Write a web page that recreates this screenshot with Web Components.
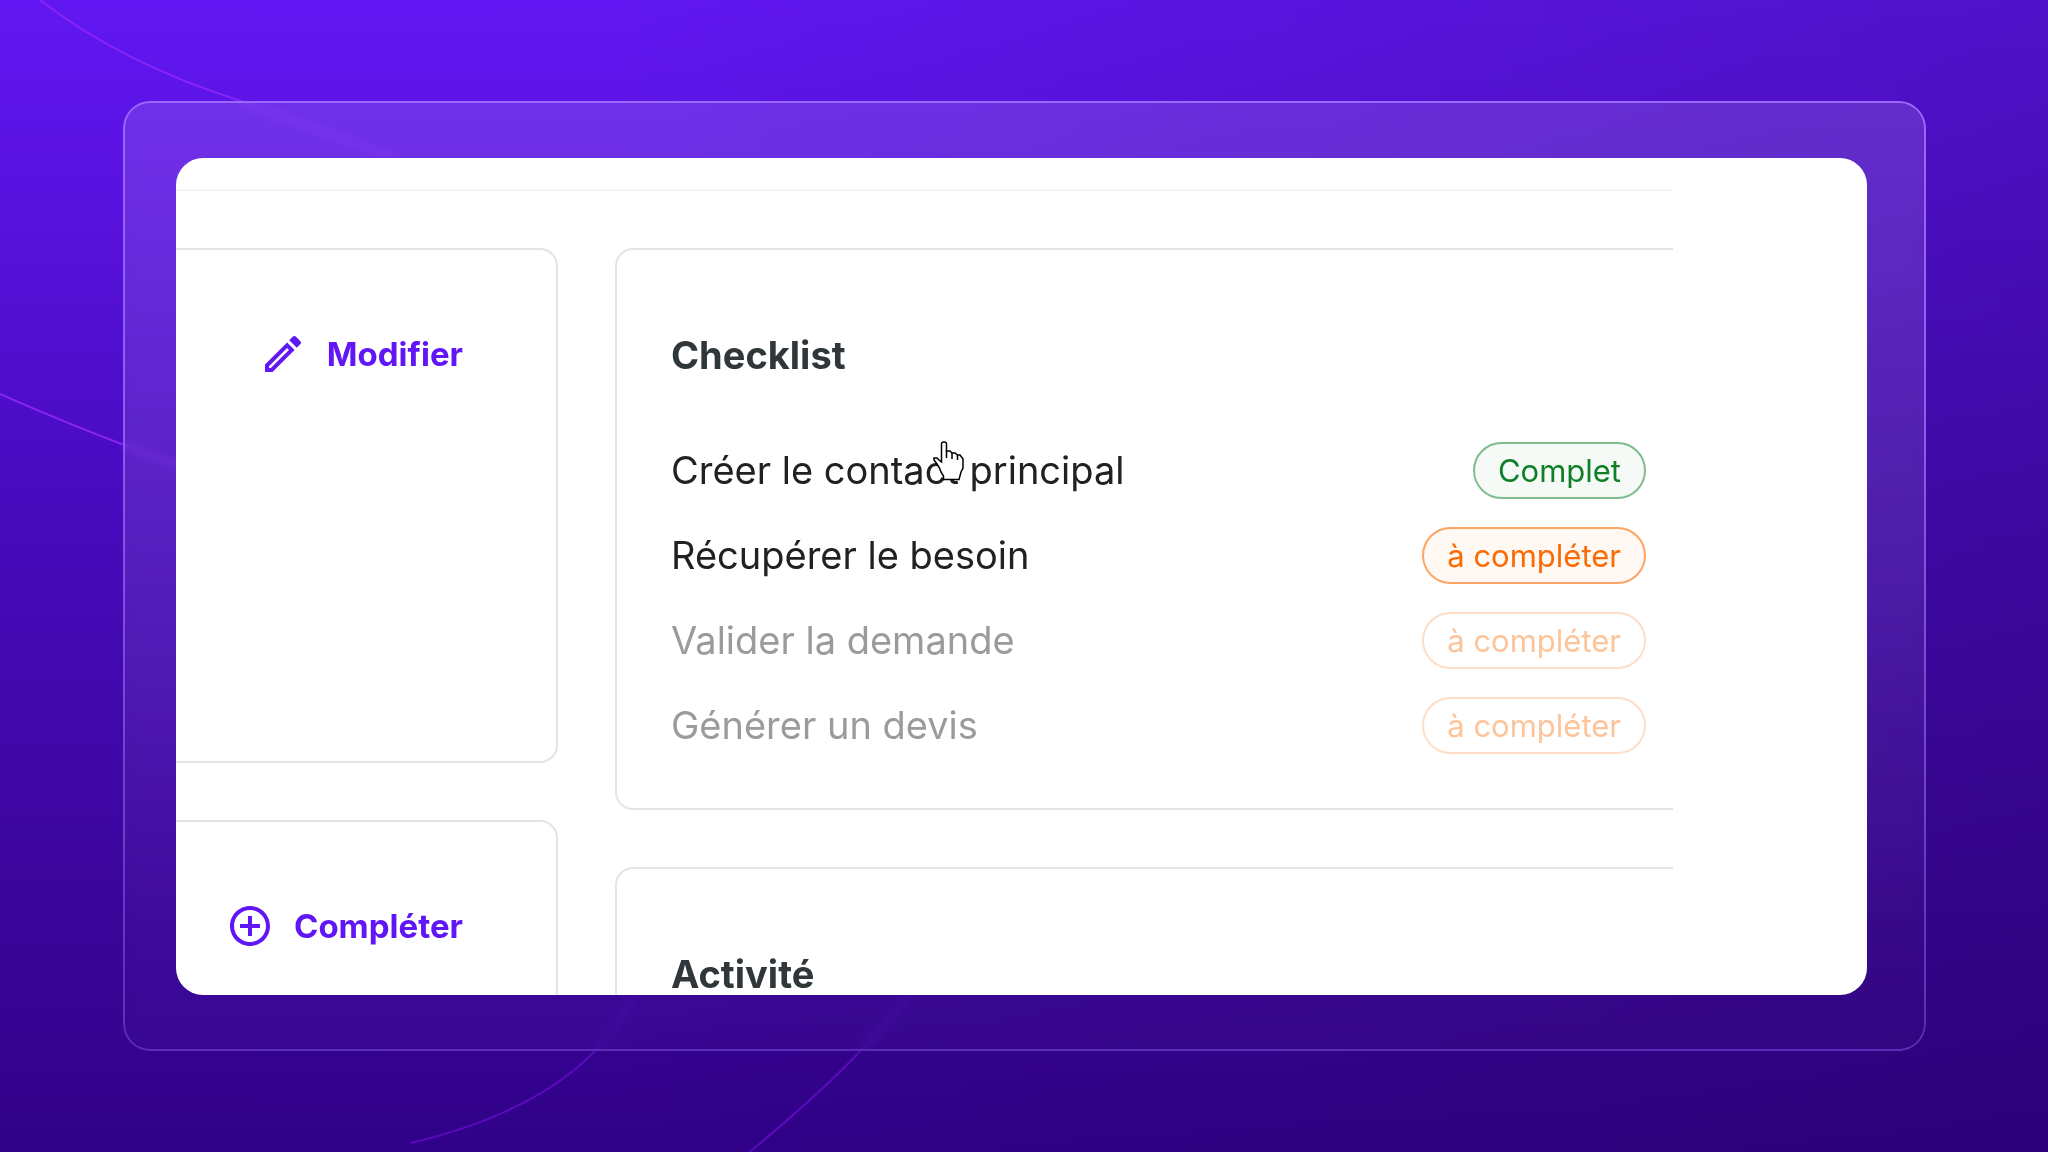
<!DOCTYPE html>
<html lang="fr">
<head>
<meta charset="utf-8">
<meta name="viewport" content="width=device-width, initial-scale=1">
<title>Checklist</title>
<style>
  body { margin: 0; font-family: Inter, "Liberation Sans", sans-serif; font-optical-sizing: none; }
</style>
</head>
<body>
<promo-stage>
  <glass-frame>
    <app-window>
      <action-card slot="aside" class="tall" icon="edit">Modifier</action-card>
      <action-card slot="aside" icon="add">Compléter</action-card>
      <panel-card heading="Checklist">
        <check-list>
          <check-item status="done" label="Créer le contact principal"><hand-pointer slot="pointer"></hand-pointer></check-item>
          <check-item status="todo" label="Récupérer le besoin"></check-item>
          <check-item status="todo" label="Valider la demande" muted></check-item>
          <check-item status="todo" label="Générer un devis" muted></check-item>
        </check-list>
      </panel-card>
      <panel-card heading="Activité"></panel-card>
    </app-window>
  </glass-frame>
</promo-stage>

<script>
  class BaseElement extends HTMLElement {
    connectedCallback() {
      if (!this.shadowRoot) this.attachShadow({ mode: 'open' }).innerHTML = this.render();
    }
  }

  // Full-window violet backdrop with thin decorative curves
  customElements.define('promo-stage', class extends BaseElement {
    render() {
      return `<style>
        :host {
          display: flex; box-sizing: border-box; height: 100vh; position: relative; overflow: hidden;
          padding: 101px 122px 101px 123px;
          background:
            linear-gradient(90deg, rgba(24,0,70,0) 30%, rgba(24,0,70,.24) 100%),
            linear-gradient(180deg, #6117f2 0%, #5812de 18%, #480bbe 43%, #3c069d 76%, #300188 100%);
        }
        svg { position: absolute; left: 0; top: 0; width: 100%; height: 100%; }
        path { fill: none; stroke-width: 2; }
        .high { stroke: #8a24f5; }
        .low { stroke: #5a0cbc; }
      </style>
      <svg viewBox="0 0 2048 1152" preserveAspectRatio="none" aria-hidden="true">
        <path class="high" d="M40 0Q123 64 241 101Q310 128 393 157"/>
        <path class="high" d="M0 394Q76 428 180 466"/>
        <path class="low" d="M411 1143Q590 1100 635 990"/>
        <path class="low" d="M747 1154Q862 1060 912 990"/>
      </svg>
      <slot></slot>`;
    }
  });

  customElements.define('glass-frame', class extends BaseElement {
    render() {
      return `<style>
        :host {
          display: flex; flex: 1; min-width: 0; box-sizing: border-box; position: relative;
          padding: 57px 59px 56px 53px; border-radius: 27px;
          background: linear-gradient(180deg, rgba(255,255,255,.12), rgba(255,255,255,.09) 45%, rgba(255,255,255,.02) 90%);
          backdrop-filter: blur(5px);
        }
        .edge {
          position: absolute; inset: 0; border-radius: inherit; padding: 2px; pointer-events: none;
          background: linear-gradient(180deg, #9a68fb, #8e5af0 35%, #5b2cb6);
          mask: linear-gradient(#000 0 0) content-box exclude, linear-gradient(#000 0 0);
        }
      </style>
      <div class="edge"></div>
      <slot></slot>`;
    }
  });

  // White window: header rule, an aside column and a main column that run past the bottom
  customElements.define('app-window', class extends BaseElement {
    render() {
      return `<style>
        :host {
          display: block; flex: 1; min-width: 0; overflow: hidden; position: relative;
          background: #fff; border-radius: 27px; box-sizing: border-box; padding-right: 194px;
        }
        header { height: 31px; border-bottom: 2px solid #f4f4f4; }
        .columns { display: flex; gap: 57px; padding-top: 57px; }
        aside, main { display: flex; flex-direction: column; gap: 57px; }
        aside { flex: 0 0 382px; }
        main { flex: 1; min-width: 0; }
      </style>
      <header></header>
      <div class="columns">
        <aside><slot name="aside"></slot></aside>
        <main><slot></slot></main>
      </div>`;
    }
  });

  const icons = {
    edit: 'm14.06 9.02.92.92L5.92 19H5v-.92l9.06-9.06M17.66 3c-.25 0-.51.1-.7.29l-1.83 1.83 3.75 3.75 1.83-1.83c.39-.39.39-1.02 0-1.41l-2.34-2.34c-.2-.2-.45-.29-.71-.29zm-3.6 3.19L3 17.25V21h3.75L17.81 9.94l-3.75-3.75z',
    add: 'M13 7h-2v4H7v2h4v4h2v-4h4v-2h-4V7zm-1-5C6.48 2 2 6.48 2 12s4.48 10 10 10 10-4.48 10-10S17.52 2 12 2zm0 18c-4.41 0-8-3.59-8-8s3.59-8 8-8 8 3.59 8 8-3.59 8-8 8z'
  };

  customElements.define('action-card', class extends BaseElement {
    render() {
      return `<style>
        :host {
          display: flex; justify-content: flex-end; align-items: flex-start; box-sizing: border-box;
          height: 280px; padding: 80px 93px 0 0; border: 2px solid #e4e4e4; border-left: 0; border-radius: 0 18px 18px 0;
        }
        :host(.tall) { height: 515px; }
        button {
          display: flex; align-items: center; gap: 20px; padding: 0; border: 0; background: none;
          font: 700 33px/48px Inter, "Liberation Sans", sans-serif; color: #6117f5; cursor: pointer;
        }
        svg { width: 48px; height: 48px; fill: currentColor; }
      </style>
      <button type="button">
        <svg viewBox="0 0 24 24" aria-hidden="true"><path d="${icons[this.getAttribute('icon')]}"/></svg>
        <slot></slot>
      </button>`;
    }
  });

  customElements.define('panel-card', class extends BaseElement {
    render() {
      return `<style>
        :host {
          display: block; box-sizing: border-box; padding: 80px 27px 54px 54px;
          border: 2px solid #e4e4e4; border-right: 0; border-radius: 18px 0 0 18px;
        }
        h2 { margin: 0; font-size: 38px; line-height: 50px; font-weight: 700; color: #2f373a; }
      </style>
      <h2>${this.getAttribute('heading')}</h2>
      <slot></slot>`;
    }
  });

  customElements.define('check-list', class extends BaseElement {
    connectedCallback() { this.setAttribute('role', 'list'); super.connectedCallback(); }
    render() {
      return `<style>
        :host { display: flex; flex-direction: column; gap: 28px; margin-top: 62px; }
      </style>
      <slot></slot>`;
    }
  });

  customElements.define('check-item', class extends BaseElement {
    connectedCallback() { this.setAttribute('role', 'listitem'); super.connectedCallback(); }
    render() {
      const status = this.getAttribute('status');
      return `<style>
        :host {
          display: flex; justify-content: space-between; align-items: center; position: relative;
          font-size: 38px; line-height: 57px; color: #212121;
        }
        .badge {
          box-sizing: border-box; padding: 0 23px; border: 2px solid; border-radius: 29px;
          font-size: 31px; line-height: 53px;
        }
        .done { color: #0f8028; border-color: #80bc8d; background: #f5faf6; }
        .todo { color: #fb6b04; border-color: #fda565; background: #fff8f3; }
        :host([muted]) { color: #9b9b9b; }
        :host([muted]) .badge { color: #fdc49a; border-color: #fedec7; background: #fff; }
      </style>
      <span>${this.getAttribute('label')}</span>
      <span class="badge ${status}">${status === 'done' ? 'Complet' : 'à compléter'}</span>
      <slot name="pointer"></slot>`;
    }
  });

  // Hand cursor that hovers over the first item
  customElements.define('hand-pointer', class extends BaseElement {
    render() {
      return `<style>
        :host { position: absolute; left: 262px; top: -1px; width: 32px; height: 41px; }
        svg { display: block; width: 32px; height: 41px; }
      </style>
      <svg viewBox="0 0 32 41" aria-hidden="true" stroke="#000" stroke-width="1.500">
        <path d="M8.500 21V3Q8.500 1 11 1T13.500 3V10H17L19 12H22L24.500 14H27L30 18V27L28 31L26 38.500H10.500V35L8 31L6.500 27L4 23L1 19V17H4L6 19Z" fill="#fff"/>
        <path d="M13.500 10V17M19 12V18M24.500 14V19" fill="none"/>
      </svg>`;
    }
  });
</script>
</body>
</html>
